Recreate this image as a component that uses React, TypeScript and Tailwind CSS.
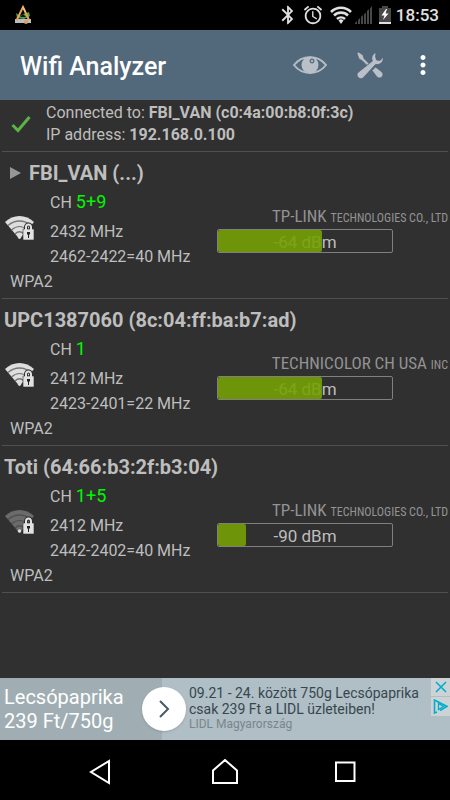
import { MdAlarm, MdBluetooth, MdMoreVert } from "react-icons/md";

interface Network {
  name: string;
  channel: string;
  frequency: string;
  range: string;
  security: string;
  vendor: string;
  vendorSuffix: string;
  signal: number;
  fill: number;
  group?: boolean;
  weak?: boolean;
}

const networks: Network[] = [
  {
    name: "FBI_VAN (...)",
    channel: "5+9",
    frequency: "2432 MHz",
    range: "2462-2422=40 MHz",
    security: "WPA2",
    vendor: "TP-LINK",
    vendorSuffix: "TECHNOLOGIES CO., LTD",
    signal: -64,
    fill: 60,
    group: true,
  },
  {
    name: "UPC1387060 (8c:04:ff:ba:b7:ad)",
    channel: "1",
    frequency: "2412 MHz",
    range: "2423-2401=22 MHz",
    security: "WPA2",
    vendor: "TECHNICOLOR CH USA",
    vendorSuffix: "INC",
    signal: -64,
    fill: 60,
  },
  {
    name: "Toti (64:66:b3:2f:b3:04)",
    channel: "1+5",
    frequency: "2412 MHz",
    range: "2442-2402=40 MHz",
    security: "WPA2",
    vendor: "TP-LINK",
    vendorSuffix: "TECHNOLOGIES CO., LTD",
    signal: -90,
    fill: 16,
    weak: true,
  },
];

const StatusBar = () => {
  return (
    <div className="flex h-[30px] shrink-0 items-center bg-black pl-[14px] pr-[11px] text-[#e0e0e0]">
      <svg width="18" height="20" viewBox="0 0 18 20" fill="none">
        <path d="M1 14h16v4H1z" fill="#b9bec2" />
        <path d="M2 8l4 3 3-2 6-2 1 4-6 3-7-1z" fill="#4fa04a" />
        <path d="M2.500 15.500L9 2l6 13" stroke="#e8a25c" strokeWidth="2" />
        <path d="M9 2l2.500 5" stroke="#f0d8a8" strokeWidth="1" />
        <path d="M6 12l3-3 3 3z" fill="#111" />
        <circle cx="12" cy="17" r="2" fill="#e0a060" />
      </svg>
      <div className="ml-auto flex items-center">
        <MdBluetooth size={22} className="mr-[3px]" />
        <MdAlarm size={22} className="mr-[6px]" />
        <svg width="22" height="18" viewBox="0 0 22 18" fill="none">
          <path
            d="M1 6a14 14 0 0 1 20 0M4 9.500a10 10 0 0 1 14 0M7 13a6 6 0 0 1 8 0"
            stroke="currentColor"
            strokeWidth="2.600"
          />
          <path d="M8.500 14.500a3.500 3.500 0 0 1 5 0L11 18z" fill="currentColor" />
        </svg>
        <svg width="18" height="18" viewBox="0 0 18 18" className="ml-[3px]" fill="#484848">
          <path d="M0 18v-1l2-2v3zM3 18v-4l2-2v6zM6 18v-7l2-2v9zM9 18V8.500l2-2V18zM12 18V5l2-2v15zM15 18V2.500L17 0v18z" />
        </svg>
        <svg width="12" height="18" viewBox="0 0 12 18" className="ml-[6px]">
          <path d="M3 2V0h6v2h3v16H0V2z" fill="#484848" />
          <path d="M7 3L2.500 9.500h3L4 14l5.500-6.500h-3L8 3z" fill="#fff" />
          <path d="M0 16h12v2H0z" fill="#e0e0e0" />
        </svg>
        <span className="ml-[5px] pt-[2px] text-[17px] font-medium">18:53</span>
      </div>
    </div>
  );
};

const Header = () => {
  return (
    <header className="flex h-[70px] shrink-0 items-center bg-[#52687b] pl-5 pr-3 text-white">
      <h1 className="pt-[3px] text-[25px] font-medium">Wifi Analyzer</h1>
      <button className="ml-auto" aria-label="View">
        <svg width="36" height="20" viewBox="0 0 36 20">
          <path
            d="M2 10C10-.5 26-.5 34 10 26 20.500 10 20.500 2 10z"
            fill="#52687b"
            stroke="#b4bcc4"
            strokeWidth="2"
          />
          <circle cx="18" cy="10" r="8.500" fill="#b9c0c8" />
          <circle cx="20" cy="6" r="2" fill="#a9b2bb" stroke="#43576a" />
        </svg>
      </button>
      <button className="ml-7" aria-label="Settings">
        <svg width="28" height="28" viewBox="0 0 28 28" fill="none">
          <path
            d="M1 2.500L2.500 1l4.500 3 1 3.500 5 5-2 2-5-5L3 8z"
            fill="#b9c0c8"
            stroke="#43576a"
            strokeWidth="0.600"
          />
          <path
            d="M16 19.500l3.500-3.500 6.500 5c3 3.500-1.500 8-5 5z"
            fill="#b9c0c8"
            stroke="#43576a"
            strokeWidth="0.600"
          />
          <path
            d="M20 1.500C16 3 15 7 16.500 10L2 21.500c-3 3 1.500 8 5 5.500L19.500 13.500c4.500.5 8-2 8-7.500L24 9.500l-3.500-.5-1-3.500z"
            fill="#b9c0c8"
            stroke="#43576a"
            strokeWidth="0.600"
          />
        </svg>
      </button>
      <button className="ml-6" aria-label="More options">
        <MdMoreVert size={30} />
      </button>
    </header>
  );
};

const WifiLockIcon = ({ weak }: { weak?: boolean }) => {
  return (
    <svg width="30" height="25" viewBox="0 0 30 25" fill="none" className="ml-[3px]">
      <path
        d="M0 7C8-1 21-1 29 7L14.500 24z"
        fill={weak ? "#6b6b6b" : "#dedede"}
      />
      <path
        d="M3 10.500c7-6 16-6 23 0M6.500 15c5-4.500 11-4.500 16 0M10 19c3-3 6-3 9 0"
        stroke={weak ? "#505050" : "#777"}
        strokeWidth="1.300"
      />
      <circle cx="14.500" cy="22" r="1.800" fill="#dedede" />
      <path
        d="M21 15v-3a2.500 2.500 0 0 1 5 0v3"
        stroke="#303030"
        strokeWidth="4"
      />
      <path d="M18 14h11v11H18z" fill="#e2e2e2" stroke="#303030" strokeWidth="0.600" />
      <path d="M21 15v-3a2.500 2.500 0 0 1 5 0v3" stroke="#e2e2e2" strokeWidth="2" />
      <path d="M22 17h3v2.500h-1V23h-1v-3.500h-1z" fill="#222" />
    </svg>
  );
};

const NetworkItem = ({ network }: { network: Network }) => {
  return (
    <li className="mx-[2px] border-b border-[#505050] pt-2 pb-1">
      <div className="flex items-center pl-[2px] text-[20px] leading-[26px] font-bold">
        {network.group && (
          <svg width="11" height="12" viewBox="0 0 11 12" className="mr-2 ml-[6px]">
            <path d="M0 0l11 6-11 6z" fill="#969696" />
          </svg>
        )}
        <h2>{network.name}</h2>
      </div>
      <div className="flex">
        <div className="flex w-12 shrink-0 items-center">
          <WifiLockIcon weak={network.weak} />
        </div>
        <div className="w-[167px] shrink-0 text-[16px] leading-[25px]">
          <div className="leading-8">
            CH <span className="text-[18px] text-[#00f800]">{network.channel}</span>
          </div>
          <div>{network.frequency}</div>
          <div>{network.range}</div>
        </div>
        <div className="flex grow flex-col pt-5">
          <div className="text-right font-['Roboto_Condensed','Liberation_Sans_Narrow',Roboto,sans-serif] text-[17px] leading-[21px] whitespace-nowrap text-[#939393]">
            {network.vendor}{" "}
            <span className="text-[12px]">{network.vendorSuffix}</span>
          </div>
          <div className="relative h-6 w-[176px] overflow-hidden rounded-xs border border-[#808080] text-center text-[17px] leading-[24px]">
            {network.signal} dBm
            <div
              className="absolute inset-y-0 left-0 rounded-xs bg-[#76a106]/90"
              style={{ width: `${network.fill}%` }}
            />
          </div>
        </div>
      </div>
      <div className="pl-2 text-[16px] leading-[25px]">{network.security}</div>
    </li>
  );
};

const AdBanner = () => {
  return (
    <div className="relative flex h-[62px] shrink-0 bg-[#b0bec5]">
      <div className="w-[162px] shrink-0 bg-[#a0aeb4] pt-[7px] pl-1 text-[20px] leading-6 text-white">
        Lecsópaprika
        <br />
        239 Ft/750g
      </div>
      <div className="pt-[7px] pl-[27px] text-[14px] leading-4 text-[#37474f]">
        09.21 - 24. között 750g Lecsópaprika
        <br />
        csak 239 Ft a LIDL üzleteiben!
        <div className="text-[12px] leading-[14px] text-[#78868c]">
          LIDL Magyarország
        </div>
      </div>
      <button
        className="absolute top-[9px] left-[142px] flex size-11 items-center justify-center rounded-full bg-white shadow"
        aria-label="Open"
      >
        <svg width="12" height="20" viewBox="0 0 12 20" fill="none">
          <path d="M2 2l8 8-8 8" stroke="#455a64" strokeWidth="2" />
        </svg>
      </button>
      <div className="absolute top-0 right-0 flex flex-col gap-px">
        <button className="flex h-[18px] w-[19px] items-center justify-center bg-[#cdd3d5]" aria-label="Close ad">
          <svg width="12" height="12" viewBox="0 0 12 12">
            <path d="M1 1l10 10M11 1L1 11" stroke="#00aecd" strokeWidth="1.600" />
          </svg>
        </button>
        <button className="flex h-[19px] w-[19px] items-center justify-center bg-[#cdd3d5]" aria-label="Ad choices">
          <svg width="15" height="15" viewBox="0 0 15 15" fill="none" stroke="#00aecd">
            <path d="M4 13l-2.500 1V1L14 7.500 7 11.500" strokeWidth="1.600" />
            <path d="M5.500 4.500v6l5-3z" strokeWidth="1.300" />
          </svg>
        </button>
      </div>
    </div>
  );
};

const NavBar = () => {
  return (
    <nav className="flex h-[60px] shrink-0 items-center justify-center gap-[94px] bg-black pt-1 text-white">
      <button aria-label="Back">
        <svg width="36" height="26" viewBox="0 0 36 26" fill="none" stroke="currentColor" strokeWidth="2">
          <path d="M27 2v22L9 13z" />
        </svg>
      </button>
      <button aria-label="Home">
        <svg width="26" height="26" viewBox="0 0 26 26" fill="none" stroke="currentColor" strokeWidth="2">
          <path d="M1 24V11.500L13 1l12 10.500V24z" />
        </svg>
      </button>
      <button aria-label="Recent apps">
        <svg width="36" height="26" viewBox="0 0 36 26" fill="none" stroke="currentColor" strokeWidth="2">
          <path d="M4 3.500h18.500V22H4z" />
        </svg>
      </button>
    </nav>
  );
};

export default function App() {
  return (
    <div className="flex min-h-screen flex-col bg-[#303030] font-[Roboto,sans-serif] text-[#bebebe]">
      <StatusBar />
      <Header />
      <main className="grow">
        <div className="mx-[2px] flex items-center border-b border-[#505050] pt-[2px] pb-[5px] text-[16px] leading-[22px]">
          <svg width="20" height="18" viewBox="0 0 20 18" fill="none" className="mr-[15px] ml-[9px] shrink-0">
            <path d="M1.500 10l5.500 5.500L18.500 2" stroke="#5cb244" strokeWidth="3" />
          </svg>
          <div>
            <div>
              Connected to: <b>FBI_VAN (c0:4a:00:b8:0f:3c)</b>
            </div>
            <div>
              IP address: <b>192.168.0.100</b>
            </div>
          </div>
        </div>
        <ul>
          {networks.map((network) => (
            <NetworkItem key={network.name} network={network} />
          ))}
        </ul>
      </main>
      <AdBanner />
      <NavBar />
    </div>
  );
}
